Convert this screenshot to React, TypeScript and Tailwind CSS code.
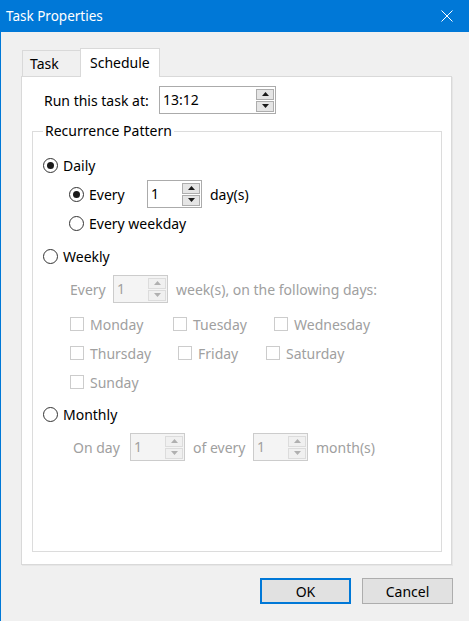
import type { ReactNode } from "react";

const dim = "text-[#a0a0a0]";

function Arrow({ up, off }: { up?: boolean; off?: boolean }) {
  return (
    <svg width="7" height="4" viewBox="0 0 7 4" className={off ? "fill-[#b0b0b0]" : "fill-[#1a1a1a]"}>
      <polygon points={up ? "0,4 3.5,0 7,4" : "0,0 7,0 3.5,4"} />
    </svg>
  );
}

function Spin({ value, off, wide }: { value: string; off?: boolean; wide?: boolean }) {
  return (
    <div
      className={`flex h-[28px] items-center border ${wide ? "w-[117px]" : "w-[55px]"} ${
        off ? "border-[#cccccc] bg-[#f4f4f4] text-[#a0a0a0]" : "border-[#ababab] bg-white"
      }`}
    >
      <span className="flex-1 pl-[3px] leading-none">{value}</span>
      <div className="mr-[1px] flex flex-col gap-[1px]">
        <span
          className={`flex h-[11px] w-[18px] items-center justify-center border ${
            off ? "border-[#dcdcdc] bg-[#f0f0f0]" : "border-[#adadad] bg-[#e5e5e5]"
          }`}
        >
          <Arrow up off={off} />
        </span>
        <span
          className={`flex h-[11px] w-[18px] items-center justify-center border ${
            off ? "border-[#dcdcdc] bg-[#f0f0f0]" : "border-[#adadad] bg-[#e5e5e5]"
          }`}
        >
          <Arrow off={off} />
        </span>
      </div>
    </div>
  );
}

function Radio({ on, children, className = "" }: { on?: boolean; children: ReactNode; className?: string }) {
  return (
    <label className={`flex items-center gap-[5px] ${className}`}>
      <span className="flex h-[15px] w-[15px] items-center justify-center rounded-full border border-[#333333] bg-white">
        {on && <span className="h-[7px] w-[7px] rounded-full bg-[#1a1a1a]" />}
      </span>
      <span>{children}</span>
    </label>
  );
}

function Check({ label, className = "" }: { label: string; className?: string }) {
  return (
    <label className={`flex items-center gap-[6px] ${dim} ${className}`}>
      <span className="h-[14px] w-[14px] border border-[#cccccc] bg-white" />
      <span>{label}</span>
    </label>
  );
}

function Button({ children, primary }: { children: ReactNode; primary?: boolean }) {
  return (
    <button
      className={`flex h-[26px] w-[91px] items-center justify-center bg-[#e1e1e1] ${
        primary ? "border-2 border-[#0078d7]" : "border border-[#adadad]"
      }`}
    >
      {children}
    </button>
  );
}

export default function App() {
  return (
    <div className="h-[621px] w-[469px] overflow-hidden border-l border-[#0078d7] bg-[#f0f0f0] font-['Noto_Sans',sans-serif] text-[14px] text-black">
      {/* title bar */}
      <div className="flex h-[32px] items-center justify-between bg-[#0078d7] pl-[5px] pr-[16px] text-[13.5px] text-white">
        <span>Task Properties</span>
        <svg width="12" height="12" viewBox="0 0 12 12">
          <path d="M0.5 0.5 L11.5 11.5 M11.5 0.5 L0.5 11.5" stroke="#fff" strokeWidth="1" />
        </svg>
      </div>

      <div className="pl-[20px]">
        {/* tabs */}
        <div className="mt-[16px] flex items-end pl-[1px]">
          <div className="flex h-[26px] w-[59px] items-center border border-b-0 border-[#d9d9d9] bg-[#f0f0f0] pl-[7px]">
            Task
          </div>
          <div className="relative z-10 -mb-[1px] -ml-[1px] flex h-[29px] w-[80px] items-center border border-b-0 border-[#d9d9d9] bg-white pb-[2px] pl-[9px]">
            Schedule
          </div>
        </div>

        {/* tab page */}
        <div className="h-[489px] w-[431px] border border-[#d9d9d9] bg-white pt-[9px] shadow-[1px_1px_0_#e6e6e6]">
          <div className="flex h-[28px] items-center pl-[22px]">
            <span className="w-[115px]">Run this task at:</span>
            <Spin value="13:12" wide />
          </div>

          <div className="relative ml-[10px] mt-[17px] h-[421px] w-[410px] border border-[#dcdcdc] pl-[10px] pt-[19px]">
            <span className="absolute -top-[11px] left-[10px] bg-white px-[2px] leading-[20px]">Recurrence Pattern</span>

            {/* daily */}
            <div className="flex h-[28px] items-center">
              <Radio on>Daily</Radio>
            </div>
            <div className="mt-[1px] flex h-[28px] items-center pl-[26px]">
              <Radio on className="w-[78px]">
                Every
              </Radio>
              <Spin value="1" />
              <span className="ml-[8px]">day(s)</span>
            </div>
            <div className="mt-[1px] flex h-[28px] items-center pl-[26px]">
              <Radio>Every weekday</Radio>
            </div>

            {/* weekly */}
            <div className="mt-[5px] flex h-[28px] items-center">
              <Radio>Weekly</Radio>
            </div>
            <div className={`mt-[5px] flex h-[28px] items-center pl-[27px] ${dim}`}>
              <span className="w-[43px]">Every</span>
              <Spin value="1" off />
              <span className="ml-[8px]">week(s), on the following days:</span>
            </div>
            <div className="mt-[7px] flex h-[28px] items-center pl-[27px]">
              <Check label="Monday" className="w-[103px]" />
              <Check label="Tuesday" className="w-[101px]" />
              <Check label="Wednesday" />
            </div>
            <div className="mt-[1px] flex h-[28px] items-center pl-[27px]">
              <Check label="Thursday" className="w-[108px]" />
              <Check label="Friday" className="w-[88px]" />
              <Check label="Saturday" />
            </div>
            <div className="mt-[1px] flex h-[28px] items-center pl-[27px]">
              <Check label="Sunday" />
            </div>

            {/* monthly */}
            <div className="mt-[4px] flex h-[28px] items-center">
              <Radio>Monthly</Radio>
            </div>
            <div className={`mt-[5px] flex h-[28px] items-center pl-[30px] ${dim}`}>
              <span className="w-[57px]">On day</span>
              <Spin value="1" off />
              <span className="ml-[8px] w-[60px]">of every</span>
              <Spin value="1" off />
              <span className="ml-[8px]">month(s)</span>
            </div>
          </div>
        </div>

        <div className="mt-[13px] flex justify-end gap-[11px] pr-[16px]">
          <Button primary>OK</Button>
          <Button>Cancel</Button>
        </div>
      </div>
    </div>
  );
}
